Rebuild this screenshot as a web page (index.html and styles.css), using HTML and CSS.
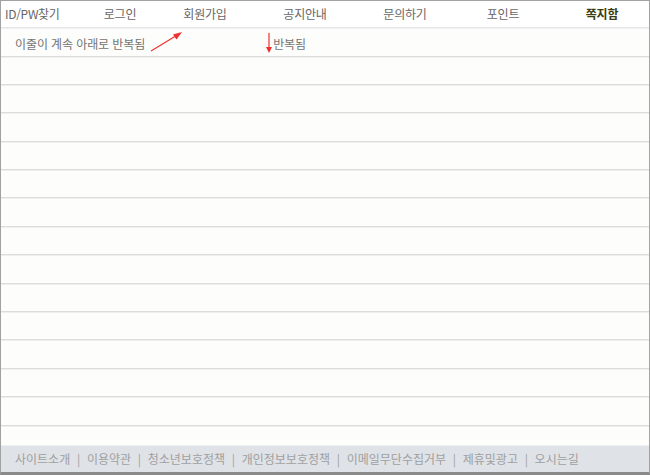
FILE: index.html
```html
<!DOCTYPE html>
<html lang="ko">
<head>
<meta charset="utf-8">
<link rel="stylesheet" href="styles.css">
</head>
<body>
<div class="frame">
  <nav class="nav">
    <span class="nav-item first">ID/PW찾기</span>
    <span class="nav-item">로그인</span>
    <span class="nav-item">회원가입</span>
    <span class="nav-item">공지안내</span>
    <span class="nav-item">문의하기</span>
    <span class="nav-item">포인트</span>
    <span class="nav-item active">쪽지함</span>
  </nav>
  <div class="rows">
    <div class="row first-row">
      <span class="note">이줄이 계속 아래로 반복됨</span>
      <span class="note note2">반복됨</span>
      <svg class="arrows" width="650" height="40" viewBox="0 0 650 40">
        <line x1="150" y1="21" x2="178" y2="4" stroke="#f03030" stroke-width="1.2"/>
        <polygon points="181,2 172,4.5 175.5,9.5" fill="#f03030"/>
        <line x1="268" y1="3" x2="268" y2="19" stroke="#f03030" stroke-width="1.2"/>
        <polygon points="265,17 271,17 268,23" fill="#f03030"/>
      </svg>
    </div>
    <div class="row"></div>
    <div class="row"></div>
    <div class="row"></div>
    <div class="row"></div>
    <div class="row"></div>
    <div class="row"></div>
    <div class="row"></div>
    <div class="row"></div>
    <div class="row"></div>
    <div class="row"></div>
    <div class="row"></div>
    <div class="row"></div>
    <div class="row"></div>
    <div class="row"></div>
  </div>
  <footer class="footer">사이트소개 &nbsp;|&nbsp; 이용약관 &nbsp;|&nbsp; 청소년보호정책 &nbsp;|&nbsp; 개인정보보호정책 &nbsp;|&nbsp; 이메일무단수집거부 &nbsp;|&nbsp; 제휴및광고 &nbsp;|&nbsp; 오시는길</footer>
</div>
</body>
</html>
```
FILE: styles.css
```css
* { box-sizing: border-box; }
html, body { margin: 0; padding: 0; background: #ffffff; }
body {
  font-family: "Noto Sans CJK KR", "Noto Sans", sans-serif;
  font-size: 12px;
}
.frame {
  width: 650px;
  height: 475px;
  border: 1px solid #a2a2a2;
  border-bottom: 3px solid #8a8a8a;
  display: flex;
  flex-direction: column;
  background: #fdfefb;
  overflow: hidden;
}
.nav {
  height: 27px;
  flex: none;
  display: grid;
  grid-template-columns: 77px 84px 86px 114px 86px 110px 88px;
  align-items: center;
  background: #ffffff;
  border-bottom: 1px solid #e6e6e6;
  box-shadow: 0 1px 0 #f1f1f1;
  color: #666666;
  font-size: 12px;
}
.nav-item { text-align: center; white-space: nowrap; line-height: 26px; letter-spacing: -0.2px; }
.nav-item.first { text-align: left; padding-left: 4px; letter-spacing: -0.3px; }
.nav-item.active { color: #3c3c0c; font-weight: bold; }
.rows {
  flex: 1;
  overflow: hidden;
  display: flex;
  flex-direction: column;
}
.row {
  flex: none;
  height: 28.4px;
  border-bottom: 1px solid #dcdcdc;
  box-shadow: 0 1px 0 #efefef;
}
.row.first-row {
  height: 28.5px;
  position: relative;
  display: flex;
  align-items: center;
  color: #737373;
  padding-top: 3px;
}
.note { margin-left: 14px; letter-spacing: -0.1px; }
.note2 { margin-left: 128px; }
.arrows { position: absolute; left: 0; top: 2px; }
.footer {
  flex: none;
  height: 27px;
  background: #dfe2e7;
  border-top: 1px solid #eef0f3;
  color: #a0a0a0;
  font-size: 12px;
  line-height: 26px;
  padding-left: 14px;
  white-space: nowrap;
}
```
